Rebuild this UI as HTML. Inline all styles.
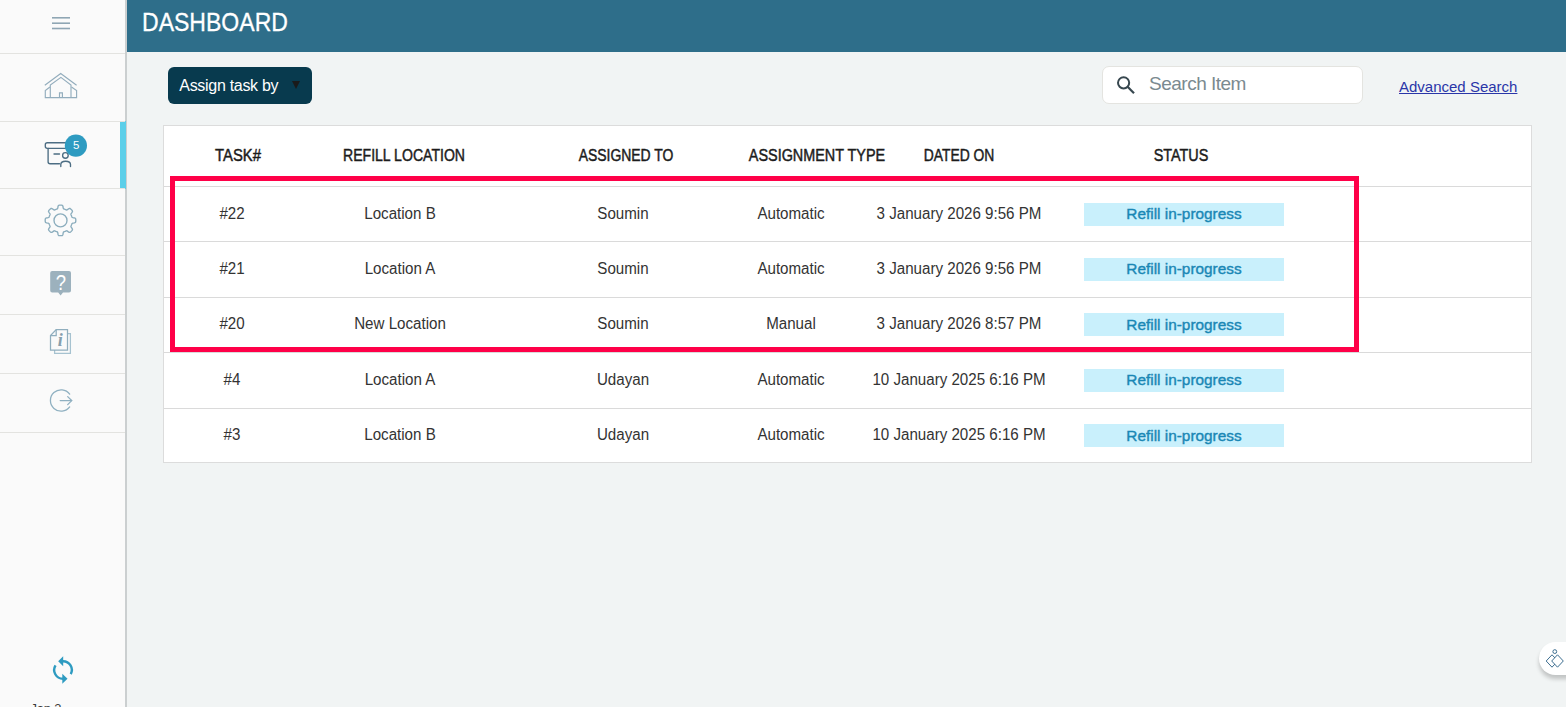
<!DOCTYPE html>
<html><head><meta charset="utf-8">
<style>
*{margin:0;padding:0;box-sizing:border-box}
html,body{width:1566px;height:707px;overflow:hidden;background:#f1f4f4;font-family:"Liberation Sans",sans-serif;position:relative}
.abs{position:absolute}
#side{position:absolute;left:0;top:0;width:125px;height:707px;background:#fafafa}
#sideb{position:absolute;left:125px;top:0;width:2px;height:707px;background:#cbcfd0}
.sep{position:absolute;left:0;width:125px;height:1px;background:#e3e3e0}
#hdr{position:absolute;left:127px;top:0;width:1439px;height:52px;background:#2e6e8a}
#title{position:absolute;left:141.7px;top:9.1px;font-size:26px;line-height:26px;color:#fff;-webkit-text-stroke:0.3px #fff;white-space:nowrap;transform:scaleX(0.886);transform-origin:0 0}
#btn{position:absolute;left:168px;top:67px;width:144px;height:37px;background:#083a4e;border-radius:6px}
#btntxt{position:absolute;left:179.3px;top:77.8px;font-size:16px;line-height:16px;color:#fff;letter-spacing:-0.3px;white-space:nowrap}
#tri{position:absolute;left:292px;top:81px;width:0;height:0;border-left:4px solid transparent;border-right:4px solid transparent;border-top:8px solid #1a1a1a}
#search{position:absolute;left:1101.5px;top:66.3px;width:261.5px;height:37.6px;background:#fff;border:1px solid #e4e4e0;border-radius:7px}
#stxt{position:absolute;left:1149px;top:74px;font-size:19px;line-height:19px;color:#7b8a90;letter-spacing:-0.5px;white-space:nowrap}
#adv{position:absolute;left:1399px;top:79px;font-size:15px;line-height:15px;color:#2a36a8;text-decoration:underline;white-space:nowrap}
#tbl{position:absolute;left:163px;top:125px;width:1369px;height:338px;background:#fff;border:1px solid #dcdcdc}
.rl{position:absolute;left:164px;width:1367px;height:1px;background:#dadada}
.t{position:absolute;white-space:nowrap;line-height:16px;font-size:16px;transform:translateX(-50%)}
.h{color:#1c1c1c;-webkit-text-stroke:0.45px #1c1c1c}
.d{color:#333}
.badge{position:absolute;width:200px;height:23px;background:#c9f0fc}
.bt{color:#1a87b5;-webkit-text-stroke:0.4px #1a87b5;font-size:15.5px;line-height:15px}
#red{position:absolute;left:170px;top:176px;width:1189px;height:175.5px;border:5px solid #ff0048}
#pill{position:absolute;left:1539px;top:642px;width:60px;height:33px;background:#fff;border-radius:17px;box-shadow:0 4px 4px rgba(0,0,0,0.2)}
</style></head><body>
<div id="side"></div>
<div id="sideb"></div>
<div class="abs" style="left:120px;top:121px;width:6px;height:67.5px;background:#5ccfe9"></div>
<div class="sep" style="top:53px"></div>
<div class="sep" style="top:121px"></div>
<div class="sep" style="top:188px"></div>
<div class="sep" style="top:255px"></div>
<div class="sep" style="top:314px"></div>
<div class="sep" style="top:373px"></div>
<div class="sep" style="top:432px"></div>


<!-- hamburger -->
<svg class="abs" style="left:0;top:0" width="125" height="53">
<g stroke="#8fa6b4" stroke-width="1.6"><line x1="52" y1="17.8" x2="70" y2="17.8"/><line x1="52" y1="23.2" x2="70" y2="23.2"/><line x1="52" y1="28.5" x2="70" y2="28.5"/></g>
</svg>
<!-- home -->
<svg class="abs" style="left:0;top:54px" width="125" height="67" viewBox="0 54 125 67">
<g fill="none" stroke="#93adbd" stroke-width="1.15" stroke-linejoin="miter">
<polyline points="44.8,85.3 60.7,73.5 76.6,85.3"/>
<polyline points="50.3,97.6 50.3,85.1 60.9,77.4 71,85.1 71,97.6"/>
<polyline points="49.9,87 45.3,90.6 45.3,97.6 76.6,97.6 76.6,90.6 71.5,87"/>
<polyline points="59.5,97.6 59.5,92.8 62.4,92.8 62.4,97.6"/>
</g></svg>
<!-- tasks -->
<svg class="abs" style="left:0;top:122px" width="125" height="66" viewBox="0 122 125 66">
<g fill="none" stroke="#4c6d83" stroke-width="1.35" stroke-linecap="round">
<rect x="45.3" y="142.7" width="22" height="5.6" rx="2"/>
<path d="M48.1,148.4 V161.7 Q48.1,163.7 50.1,163.7 H59.5"/>
<line x1="54" y1="154" x2="59.5" y2="154"/>
<circle cx="65.4" cy="155.4" r="2.8"/>
<path d="M60.8,166.5 V164.5 Q60.8,161.2 65.6,161.2 Q70.5,161.2 70.5,164.5 V166.5"/>
</g>
<circle cx="75.9" cy="145.6" r="11.1" fill="#2e9bc1"/>
<text x="76.1" y="149" font-family="Liberation Sans" font-size="11.5" fill="#fff" text-anchor="middle">5</text>
</svg>
<!-- gear -->
<svg class="abs" style="left:0;top:189px" width="125" height="66" viewBox="0 189 125 66">
<g fill="none" stroke="#8badbd" stroke-width="1.35">
<path d="M60.50,205.10 61.03,205.11 61.57,205.15 62.09,205.24 62.59,205.50 62.97,206.37 63.17,207.86 63.43,208.65 63.79,208.92 64.18,209.07 64.57,209.22 64.96,209.37 65.34,209.53 65.72,209.70 66.10,209.87 66.50,210.01 67.05,209.92 68.06,209.19 69.18,208.46 69.85,208.44 70.32,208.70 70.73,209.03 71.13,209.39 71.51,209.77 71.87,210.17 72.20,210.58 72.46,211.05 72.44,211.72 71.71,212.84 70.98,213.85 70.89,214.40 71.03,214.80 71.20,215.18 71.37,215.56 71.53,215.94 71.68,216.33 71.83,216.72 71.98,217.11 72.25,217.47 73.04,217.73 74.53,217.93 75.40,218.31 75.66,218.81 75.75,219.33 75.79,219.87 75.80,220.40 75.79,220.93 75.75,221.47 75.66,221.99 75.40,222.49 74.53,222.87 73.04,223.07 72.25,223.33 71.98,223.69 71.83,224.08 71.68,224.47 71.53,224.86 71.37,225.24 71.20,225.62 71.03,226.00 70.89,226.40 70.98,226.95 71.71,227.96 72.44,229.08 72.46,229.75 72.20,230.22 71.87,230.63 71.51,231.03 71.13,231.41 70.73,231.77 70.32,232.10 69.85,232.36 69.18,232.34 68.06,231.61 67.05,230.88 66.50,230.79 66.10,230.93 65.72,231.10 65.34,231.27 64.96,231.43 64.57,231.58 64.18,231.73 63.79,231.88 63.43,232.15 63.17,232.94 62.97,234.43 62.59,235.30 62.09,235.56 61.57,235.65 61.03,235.69 60.50,235.70 59.97,235.69 59.43,235.65 58.91,235.56 58.41,235.30 58.03,234.43 57.83,232.94 57.57,232.15 57.21,231.88 56.82,231.73 56.43,231.58 56.04,231.43 55.66,231.27 55.28,231.10 54.90,230.93 54.50,230.79 53.95,230.88 52.94,231.61 51.82,232.34 51.15,232.36 50.68,232.10 50.27,231.77 49.87,231.41 49.49,231.03 49.13,230.63 48.80,230.22 48.54,229.75 48.56,229.08 49.29,227.96 50.02,226.95 50.11,226.40 49.97,226.00 49.80,225.62 49.63,225.24 49.47,224.86 49.32,224.47 49.17,224.08 49.02,223.69 48.75,223.33 47.96,223.07 46.47,222.87 45.60,222.49 45.34,221.99 45.25,221.47 45.21,220.93 45.20,220.40 45.21,219.87 45.25,219.33 45.34,218.81 45.60,218.31 46.47,217.93 47.96,217.73 48.75,217.47 49.02,217.11 49.17,216.72 49.32,216.33 49.47,215.94 49.63,215.56 49.80,215.18 49.97,214.80 50.11,214.40 50.02,213.85 49.29,212.84 48.56,211.72 48.54,211.05 48.80,210.58 49.13,210.17 49.49,209.77 49.87,209.39 50.27,209.03 50.68,208.70 51.15,208.44 51.82,208.46 52.94,209.19 53.95,209.92 54.50,210.01 54.90,209.87 55.28,209.70 55.66,209.53 56.04,209.37 56.43,209.22 56.82,209.07 57.21,208.92 57.57,208.65 57.83,207.86 58.03,206.37 58.41,205.50 58.91,205.24 59.43,205.15 59.97,205.11Z" stroke-linejoin="round"/>
<circle cx="60.5" cy="220.4" r="6.5"/>
</g></svg>
<!-- help -->
<svg class="abs" style="left:0;top:256px" width="125" height="58" viewBox="0 256 125 58">
<path d="M52.2,271 H69 Q71,271 71,273 V290.4 Q71,292.4 69,292.4 H63 L60.6,295.5 L58.2,292.4 H52.2 Q50.2,292.4 50.2,290.4 V273 Q50.2,271 52.2,271 Z" fill="#9cb1bd"/>
<text x="0" y="0" transform="translate(60.8,289.7) scale(0.86,1)" font-family="Liberation Sans" font-size="21.5" fill="#fff" text-anchor="middle">?</text>
</svg>
<!-- info -->
<svg class="abs" style="left:0;top:315px" width="125" height="58" viewBox="0 315 125 58">
<g fill="none" stroke-width="1.25">
<path d="M67.5,333.6 H70.4 V353.3 H54.6 V350.1" stroke="#a6c2d0"/>
<path d="M56.2,329.5 H67.5 V350.1 H50.5 V335.6 Z" stroke="#90aebe"/>
<path d="M56.2,329.5 V335.6 H50.5" stroke="#90aebe"/>
</g>
<text x="60.2" y="346" font-family="Liberation Serif" font-style="italic" font-weight="bold" font-size="18" fill="#879fad" text-anchor="middle">i</text>
</svg>
<!-- logout -->
<svg class="abs" style="left:0;top:374px" width="125" height="58" viewBox="0 374 125 58">
<g fill="none" stroke="#8fb0c1" stroke-width="1.3" stroke-linecap="round">
<path d="M69.7,394.1 A10.7,10.7 0 1 0 69.7,406.9"/>
<line x1="60.2" y1="400.6" x2="71.6" y2="400.6"/>
<polyline points="67.7,396.6 71.7,400.6 67.7,404.6"/>
</g></svg>
<!-- refresh -->
<svg class="abs" style="left:40px;top:650px" width="45" height="40" viewBox="40 650 45 40">
<g fill="none" stroke="#2e9bc1" stroke-width="2.4">
<path d="M55.52,665.36 A8.8,8.8 0 0 0 63,678.8"/>
<path d="M63,661.2 A8.8,8.8 0 0 1 70.77,674.13"/>
</g>
<path d="M63.2,656.2 L63.2,666.2 L58.2,661.2 Z" fill="#2e9bc1"/>
<path d="M62.3,673.8 L62.3,683.8 L67.5,678.8 Z" fill="#2e9bc1"/>
</svg>
<div class="abs" style="left:30.5px;top:701.8px;font-size:13px;line-height:13px;color:#3a3a3a;letter-spacing:-0.2px">Jan 3</div>

<div id="hdr"></div>
<div id="title">DASHBOARD</div>
<div id="btn"></div>
<div id="btntxt">Assign task by</div>
<div id="tri"></div>
<div id="search"></div>
<svg class="abs" style="left:1115px;top:74px" width="22" height="22" viewBox="0 0 22 22">
<circle cx="8.6" cy="8.8" r="5.6" fill="none" stroke="#37474f" stroke-width="2"/>
<line x1="12.6" y1="12.8" x2="19" y2="19.3" stroke="#37474f" stroke-width="2.2"/>
</svg>
<div id="stxt">Search Item</div>
<div id="adv">Advanced Search</div>

<div id="tbl"></div>
<div class="rl" style="top:186px"></div>
<div class="rl" style="top:241px"></div>
<div class="rl" style="top:297px"></div>
<div class="rl" style="top:352px"></div>
<div class="rl" style="top:408px"></div>

<div class="t h" style="left:237.8px;top:147.5px;transform:translateX(-50%) scaleX(0.926)">TASK#</div>
<div class="t h" style="left:403.8px;top:147.5px;transform:translateX(-50%) scaleX(0.880)">REFILL LOCATION</div>
<div class="t h" style="left:625.6px;top:147.5px;transform:translateX(-50%) scaleX(0.871)">ASSIGNED TO</div>
<div class="t h" style="left:816.6px;top:147.5px;transform:translateX(-50%) scaleX(0.900)">ASSIGNMENT TYPE</div>
<div class="t h" style="left:958.5px;top:147.5px;transform:translateX(-50%) scaleX(0.866)">DATED ON</div>
<div class="t h" style="left:1180.5px;top:147.5px;transform:translateX(-50%) scaleX(0.898)">STATUS</div>
<div class="t d" style="left:231.5px;top:205.6px;transform:translateX(-50%) scaleX(0.945)">#22</div>
<div class="t d" style="left:399.5px;top:205.6px;transform:translateX(-50%) scaleX(0.945)">Location B</div>
<div class="t d" style="left:623.2px;top:205.6px;transform:translateX(-50%) scaleX(0.945)">Soumin</div>
<div class="t d" style="left:791.3px;top:205.6px;transform:translateX(-50%) scaleX(0.945)">Automatic</div>
<div class="t d" style="left:959.3px;top:205.6px;transform:translateX(-50%) scaleX(0.945)">3 January 2026 9:56 PM</div>
<div class="badge" style="left:1083.5px;top:202.6px"></div>
<div class="t bt" style="left:1184px;top:205.9px;transform:translateX(-50%) scaleX(0.991)">Refill in-progress</div>
<div class="t d" style="left:231.5px;top:261.0px;transform:translateX(-50%) scaleX(0.945)">#21</div>
<div class="t d" style="left:399.5px;top:261.0px;transform:translateX(-50%) scaleX(0.945)">Location A</div>
<div class="t d" style="left:623.2px;top:261.0px;transform:translateX(-50%) scaleX(0.945)">Soumin</div>
<div class="t d" style="left:791.3px;top:261.0px;transform:translateX(-50%) scaleX(0.945)">Automatic</div>
<div class="t d" style="left:959.3px;top:261.0px;transform:translateX(-50%) scaleX(0.945)">3 January 2026 9:56 PM</div>
<div class="badge" style="left:1083.5px;top:258.0px"></div>
<div class="t bt" style="left:1184px;top:261.3px;transform:translateX(-50%) scaleX(0.991)">Refill in-progress</div>
<div class="t d" style="left:231.5px;top:316.4px;transform:translateX(-50%) scaleX(0.945)">#20</div>
<div class="t d" style="left:399.5px;top:316.4px;transform:translateX(-50%) scaleX(0.945)">New Location</div>
<div class="t d" style="left:623.2px;top:316.4px;transform:translateX(-50%) scaleX(0.945)">Soumin</div>
<div class="t d" style="left:791.3px;top:316.4px;transform:translateX(-50%) scaleX(0.945)">Manual</div>
<div class="t d" style="left:959.3px;top:316.4px;transform:translateX(-50%) scaleX(0.945)">3 January 2026 8:57 PM</div>
<div class="badge" style="left:1083.5px;top:313.4px"></div>
<div class="t bt" style="left:1184px;top:316.7px;transform:translateX(-50%) scaleX(0.991)">Refill in-progress</div>
<div class="t d" style="left:231.5px;top:371.8px;transform:translateX(-50%) scaleX(0.945)">#4</div>
<div class="t d" style="left:399.5px;top:371.8px;transform:translateX(-50%) scaleX(0.945)">Location A</div>
<div class="t d" style="left:623.2px;top:371.8px;transform:translateX(-50%) scaleX(0.945)">Udayan</div>
<div class="t d" style="left:791.3px;top:371.8px;transform:translateX(-50%) scaleX(0.945)">Automatic</div>
<div class="t d" style="left:959.3px;top:371.8px;transform:translateX(-50%) scaleX(0.945)">10 January 2025 6:16 PM</div>
<div class="badge" style="left:1083.5px;top:368.8px"></div>
<div class="t bt" style="left:1184px;top:372.1px;transform:translateX(-50%) scaleX(0.991)">Refill in-progress</div>
<div class="t d" style="left:231.5px;top:427.2px;transform:translateX(-50%) scaleX(0.945)">#3</div>
<div class="t d" style="left:399.5px;top:427.2px;transform:translateX(-50%) scaleX(0.945)">Location B</div>
<div class="t d" style="left:623.2px;top:427.2px;transform:translateX(-50%) scaleX(0.945)">Udayan</div>
<div class="t d" style="left:791.3px;top:427.2px;transform:translateX(-50%) scaleX(0.945)">Automatic</div>
<div class="t d" style="left:959.3px;top:427.2px;transform:translateX(-50%) scaleX(0.945)">10 January 2025 6:16 PM</div>
<div class="badge" style="left:1083.5px;top:424.2px"></div>
<div class="t bt" style="left:1184px;top:427.5px;transform:translateX(-50%) scaleX(0.991)">Refill in-progress</div>

<div id="red"></div>

<div id="pill"></div>
<svg class="abs" style="left:1540px;top:645px" width="26" height="28" viewBox="1540 645 26 28">
<g fill="none" stroke="#33668a" stroke-width="0.95">
<circle cx="1554.8" cy="651.6" r="1.9"/>
<path d="M1552,654.8 L1546.2,661 L1552,667.2 L1557.8,661 Z" stroke-linejoin="round"/>
<path d="M1557.5,654.8 L1551.7,661 L1557.5,667.2 L1563.3,661 Z" stroke-linejoin="round" fill="#fff"/>
</g></svg>
</body></html>
